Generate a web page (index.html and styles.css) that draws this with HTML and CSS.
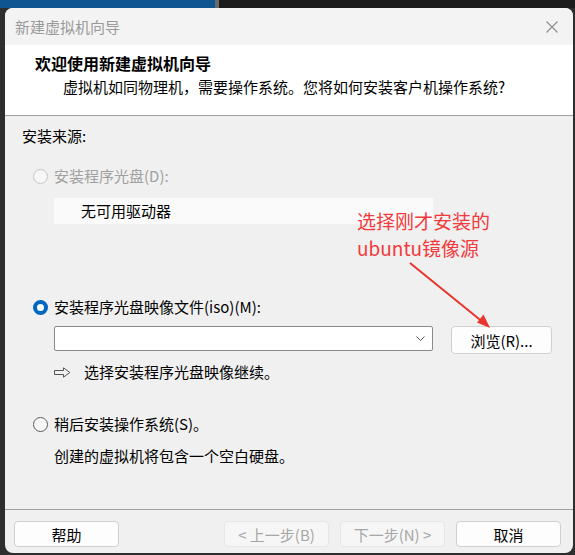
FILE: index.html
```html
<!DOCTYPE html>
<html lang="zh-CN">
<head>
  <meta charset="UTF-8">
  <title>新建虚拟机向导</title>
  <link rel="stylesheet" href="styles.css">
</head>
<body>
  <!-- franja del escritorio detrás de la ventana -->
  <div class="desk-strip"></div>

  <div class="window">
    <div class="title-bar">
      <span class="title-text">新建虚拟机向导</span>
      <svg class="close-x" width="12" height="12" viewBox="0 0 12 12">
        <path d="M0.5 0.5 L11.5 11.5 M11.5 0.5 L0.5 11.5" stroke="#8c8c8c" stroke-width="1.1" fill="none"/>
      </svg>
    </div>

    <div class="header">
      <div class="header-title">欢迎使用新建虚拟机向导</div>
      <div class="header-sub">虚拟机如同物理机，需要操作系统。您将如何安装客户机操作系统?</div>
    </div>

    <div class="content">
      <div class="source-label">安装来源:</div>

      <div class="option disabled option-first">
        <span class="radio"></span>
        <span>安装程序光盘(D):</span>
      </div>
      <div class="drive-box">无可用驱动器</div>

      <div class="option option-iso">
        <span class="radio checked"></span>
        <span>安装程序光盘映像文件(iso)(M):</span>
      </div>
      <div class="iso-row">
        <div class="combo">
          <svg width="9" height="5" viewBox="0 0 9 5">
            <path d="M0.5 0.5 L4.5 4.5 L8.5 0.5" stroke="#555" stroke-width="1" fill="none"/>
          </svg>
        </div>
        <button class="btn browse-btn">浏览(R)...</button>
      </div>
      <div class="hint">
        <svg class="hint-arrow" width="17" height="11" viewBox="0 0 17 11">
          <path d="M0.5 3.5 H9.5 V0.8 L15.8 5.5 L9.5 10.2 V7.5 H0.5 Z" stroke="#555" stroke-width="1" fill="none"/>
        </svg>
        <span>选择安装程序光盘映像继续。</span>
      </div>

      <div class="option option-later">
        <span class="radio"></span>
        <span>稍后安装操作系统(S)。</span>
      </div>
      <div class="later-desc">创建的虚拟机将包含一个空白硬盘。</div>

      <!-- anotación roja sobre la captura -->
      <div class="note">选择刚才安装的<br>ubuntu镜像源</div>
      <svg class="note-arrow" width="100" height="80" viewBox="0 0 100 80">
        <line x1="4" y1="4" x2="78" y2="64" stroke="#e8352e" stroke-width="2"/>
        <polygon points="84,69 71,63.5 77.5,55.5" fill="#e8352e"/>
      </svg>
    </div>

    <div class="footer">
      <button class="btn">帮助</button>
      <div class="footer-right">
        <button class="btn" disabled>&lt; 上一步(B)</button>
        <button class="btn" disabled>下一步(N) &gt;</button>
        <button class="btn">取消</button>
      </div>
    </div>
  </div>
</body>
</html>
```

FILE: styles.css
```css
/* Base */
html, body {
  margin: 0;
  padding: 0;
}
body {
  background-color: #2e2e2e;
  font-family: "Noto Sans CJK SC", "Noto Sans", sans-serif;
  font-size: 15px;
  color: #000;
  width: 575px;
  height: 555px;
  overflow: hidden;
}
.desk-strip {
  height: 8px;
  background: linear-gradient(to right, #0f5591 0, #0f5591 215px, #6a6a6a 215px, #6a6a6a 219px, #1c1c1c 219px);
}
/* Ventana */
.window {
  margin-left: 5px;
  width: 568px;
  height: 545px;
  background-color: #f0f0f0;
  border-radius: 8px;
  overflow: hidden;
  display: flex;
  flex-direction: column;
}
.title-bar {
  height: 37px;
  background-color: #f3f3f3;
  display: flex;
  align-items: center;
  justify-content: space-between;
  padding: 0 15px 0 10px;
}
.title-text {
  color: #9a9a9a;
  font-size: 15px;
  line-height: 20px;
}
.close-x {
  margin-top: 1px;
}
/* Cabecera blanca */
.header {
  height: 71px;
  background-color: #fff;
  border-bottom: 1px solid #a0a0a0;
  padding-top: 8px;
  box-sizing: border-box;
}
.header-title {
  font-weight: bold;
  font-size: 16px;
  line-height: 20px;
  margin-left: 30px;
}
.header-sub {
  line-height: 20px;
  margin-top: 4px;
  margin-left: 58px;
}
/* Contenido */
.content {
  position: relative;
  flex: 1;
  padding-top: 10px;
  border-bottom: 1px solid #a0a0a0;
  line-height: 20px;
}
.source-label {
  margin-left: 17px;
}
.option {
  display: flex;
  align-items: center;
  gap: 6px;
  margin-left: 28px;
  height: 20px;
}
.option-first {
  margin-top: 20px;
}
.option-iso {
  margin-top: 73px;
}
.option-later {
  margin-top: 32px;
}
.option.disabled {
  color: #a0a0a0;
}
.radio {
  width: 15px;
  height: 15px;
  box-sizing: border-box;
  border: 1px solid #5c5c5c;
  border-radius: 50%;
  background-color: #f7f7f7;
}
.disabled .radio {
  border-color: #c6c6c6;
}
.radio.checked {
  border: 4.5px solid #0067c0;
  background-color: #fff;
}
.drive-box {
  margin: 12px 0 0 49px;
  width: 379px;
  height: 26px;
  box-sizing: border-box;
  background-color: #fafafa;
  padding-left: 27px;
  line-height: 26px;
}
.iso-row {
  display: flex;
  align-items: flex-start;
  gap: 18px;
  margin: 9px 0 0 49px;
}
.combo {
  width: 379px;
  height: 25px;
  box-sizing: border-box;
  border: 1px solid #8a8a8a;
  border-radius: 2px;
  background-color: #fff;
  display: flex;
  align-items: center;
  justify-content: flex-end;
  padding-right: 7px;
}
.hint {
  display: flex;
  align-items: center;
  margin: 8px 0 0 49px;
}
.hint-arrow {
  margin-right: 13px;
}
.later-desc {
  margin: 12px 0 0 49px;
}
/* Botones */
.btn {
  width: 105px;
  height: 26px;
  box-sizing: border-box;
  border: 1px solid #d0d0d0;
  border-radius: 4px;
  background-color: #fdfdfd;
  font-family: inherit;
  font-size: 15px;
  color: #000;
  padding: 0;
}
.btn:disabled {
  background-color: #f6f6f6;
  border-color: #e6e6e6;
  color: #a6a6a6;
}
.browse-btn {
  width: 101px;
  height: 28px;
}
.footer {
  height: 43px;
  display: flex;
  justify-content: space-between;
  padding: 11px 12px 0 9px;
  box-sizing: border-box;
}
.footer-right {
  display: flex;
  gap: 11px;
}
/* Anotación */
.note {
  position: absolute;
  left: 352px;
  top: 91px;
  color: #f23a3c;
  font-size: 19px;
  line-height: 27px;
}
.note-arrow {
  position: absolute;
  left: 401px;
  top: 143px;
}
```
